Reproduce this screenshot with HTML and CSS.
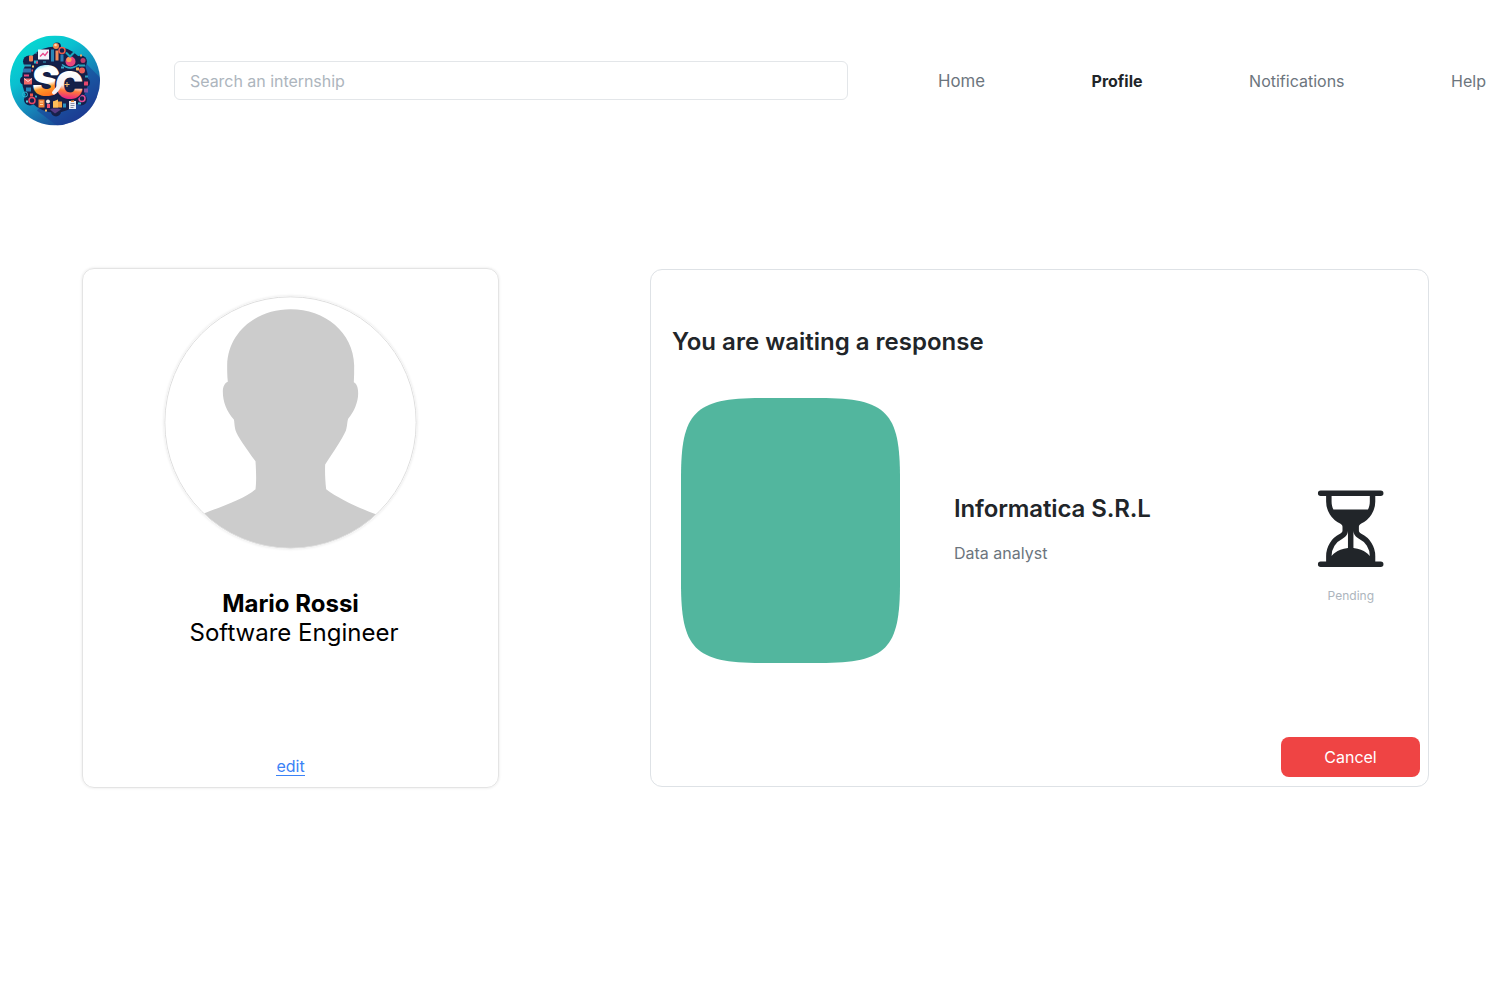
FILE: index.html
```html
<!DOCTYPE html>
<html lang="en">
<head>
<meta charset="utf-8">
<title>Profile</title>
<link rel="stylesheet" href="styles.css">
</head>
<body>
<header class="topbar">
  <svg class="logo" viewBox="0 0 90 91" role="img" aria-label="SC">
    <defs>
      <linearGradient id="sky" x1="0.1" y1="0" x2="0.8" y2="1">
        <stop offset="0" stop-color="#06e0d2"/><stop offset="0.35" stop-color="#0abfd0"/>
        <stop offset="0.62" stop-color="#1684b8"/><stop offset="1" stop-color="#1f2c86"/>
      </linearGradient>
      <linearGradient id="sFill" gradientUnits="userSpaceOnUse" x1="26" y1="27" x2="36" y2="62">
        <stop offset="0" stop-color="#35cfe6"/><stop offset="0.22" stop-color="#ffffff"/>
        <stop offset="0.62" stop-color="#ffffff"/><stop offset="0.74" stop-color="#ff9a2b"/><stop offset="1" stop-color="#ff6a1c"/>
      </linearGradient>
      <linearGradient id="cFill" gradientUnits="userSpaceOnUse" x1="62" y1="35" x2="58" y2="66">
        <stop offset="0" stop-color="#ffffff"/><stop offset="0.5" stop-color="#f4eef6"/>
        <stop offset="0.66" stop-color="#ff7a3a"/><stop offset="0.95" stop-color="#e5188f"/>
      </linearGradient>
      <clipPath id="disc"><circle cx="45" cy="45" r="45"/></clipPath>
    </defs>
    <g transform="translate(0 .5)"><g clip-path="url(#disc)">
      <rect width="90" height="90" fill="url(#sky)"/>
      <path d="M73 25L100 52V100H60L27 75z" fill="#1b3d96" opacity=".55"/>
      <circle cx="45" cy="44" r="33" fill="#16204a"/>
      <g fill="#16204a">
        <circle cx="47" cy="11" r="4"/><circle cx="19" cy="26" r="6"/><circle cx="71" cy="26" r="6"/>
        <circle cx="14" cy="45" r="4"/><circle cx="76" cy="47" r="4"/><circle cx="20" cy="64" r="6"/>
        <circle cx="71" cy="64" r="6"/><circle cx="46" cy="76" r="5"/>
      </g>
      <rect x="28" y="14" width="11" height="10" fill="#f2f4fa"/><path d="M30 21l3-3 2 2 3-4" stroke="#e8478b" stroke-width="1.3" fill="none"/>
      <circle cx="46" cy="10.500" r="3" fill="#f08a4c"/><circle cx="45.500" cy="9.500" r="1.300" fill="#ffd9b8"/>
      <rect x="41" y="14" width="3" height="12" fill="#2a86b8"/><rect x="45.500" y="15" width="3" height="10" fill="#f28b5c"/>
      <circle cx="52" cy="15" r="3" fill="none" stroke="#e95b4a" stroke-width="1.500"/><rect x="50.500" y="19" width="3" height="7" fill="#2c7cb5"/>
      <circle cx="60.500" cy="26" r="5" fill="#e8467f"/><circle cx="59" cy="24" r="2.600" fill="#ff9a5a"/>
      <path d="M52 29q8 7 17 0" stroke="#2aa7c7" stroke-width="1.500" fill="none"/><path d="M56 17l4 4 5-5" stroke="#18a7bd" stroke-width="2" fill="none"/>
      <rect x="19" y="20" width="4" height="6" rx="1" fill="#f27d55"/><rect x="24" y="25" width="4" height="3" fill="#2ab2c8"/>
      <rect x="14" y="29" width="7" height="2" fill="#28a0bb"/><rect x="13" y="33" width="8" height="4" fill="#3173ab"/>
      <rect x="22" y="30" width="2" height="2" fill="#f9c765"/><rect x="21.500" y="34" width="1.500" height="2" fill="#e94b6b"/>
      <rect x="14" y="43" width="8" height="6" fill="#f06a68"/><path d="M14 43l4 3 4-3" stroke="#ffe0df" fill="none"/>
      <rect x="14" y="39" width="5" height="2" fill="#e7487d"/><rect x="16" y="52" width="5" height="4" fill="#2683b8"/>
      <circle cx="15" cy="59" r="2.500" fill="none" stroke="#2fb4d0"/><rect x="20" y="58" width="3" height="3" fill="#ef5a4e"/>
      <circle cx="22" cy="65" r="3" fill="none" stroke="#e94764" stroke-width="1.500"/><rect x="16" y="65" width="2" height="2" fill="#57d2df"/>
      <rect x="28.500" y="64" width="6" height="8" fill="#f18439"/><path d="M30 66.500h3M30 69h3" stroke="#ffdca8"/>
      <circle cx="38" cy="66" r="2" fill="#f3e9df"/><rect x="37" y="68.500" width="3" height="4" fill="#ee5378"/>
      <rect x="43" y="66" width="9" height="6" fill="#f3a043"/><path d="M43 66l5-2v8h-5z" fill="#ffbf59"/>
      <rect x="53" y="68" width="3" height="4" fill="#2b90bf"/>
      <path d="M40 74l5 4 6-4-3-1h-6z" fill="#563a83"/><rect x="35" y="74" width="2" height="2" fill="#f7bb5f"/>
      <rect x="59" y="65.500" width="7" height="8" fill="#eef1f6"/><path d="M60.500 68h4M60.500 70h4M60.500 72h3" stroke="#6c7392" stroke-width=".8"/><rect x="61" y="64.500" width="3" height="2" fill="#f4903e"/>
      <circle cx="72" cy="63" r="3" fill="none" stroke="#e14c9a" stroke-width="1.500"/><rect x="68" y="67" width="3" height="2" fill="#37bcd0"/>
      <rect x="74" y="53" width="4" height="4" fill="#8650a2"/><rect x="74" y="46" width="4" height="4" fill="#e9476d"/>
      <circle cx="72" cy="35" r="3" fill="#e95d57"/><rect x="66" y="32" width="3" height="3" fill="#f6ae5b"/><rect x="75" y="40" width="3" height="2" fill="#2c9fbe"/>
      <rect x="69" y="29" width="6" height="2" fill="#25a6b8"/><circle cx="73" cy="25" r="2.500" fill="#bf3b69"/>
      <rect x="70" y="19" width="2" height="2" fill="#f9a65c"/><rect x="26" y="26" width="2" height="2" fill="#e94b6b"/>
      <g fill="#35a9c8"><rect x="33" y="26" width="3" height="1"/><rect x="51" y="31" width="3" height="2"/><rect x="25" y="60" width="2" height="2"/><rect x="25" y="17" width="2" height="1"/></g>
      <text class="logo-text"><tspan class="logo-s" x="22" y="60.500" fill="url(#sFill)">S</tspan><tspan class="logo-c" x="45" y="63.500" fill="url(#cFill)">C</tspan></text>
      <path d="M44 57Q48 54 50 48" stroke="#f4f2f7" stroke-width="4" stroke-linecap="round" fill="none"/>
      <path d="M57 46.500v5M54.500 49h5" stroke="#ffbc68"/>
    </g></g>
  </svg>
  <input class="search" type="text" placeholder="Search an internship">
  <nav class="nav">
    <a class="nav-home">Home</a>
    <a class="nav-active">Profile</a>
    <a>Notifications</a>
    <a>Help</a>
  </nav>
</header>
<main class="content">
  <section class="profile">
    <svg class="avatar" viewBox="41.500 32.500 759 759" aria-hidden="true">
      <defs><clipPath id="portrait"><circle cx="421" cy="412" r="377"/></clipPath></defs>
      <path clip-path="url(#portrait)" fill="#ccc" d="M163 684C220 662 284 640 316 612C319 590 318 560 316 528C285 486 262 453 256 435C252 418 253 410 251 403C230 380 218 350 218 320C218 304 224 293 233 290C231 270 231 255 231 240C234 140 320 72 421 72C524 72 609 140 612 240C612 258 612 275 611 291C620 296 624 306 624 325C624 350 612 380 594 401C590 414 592 422 587 437C576 462 550 500 525 538C524 560 525 586 528 612C563 639 625 668 679 688V800H163Z"/>
      <circle cx="421" cy="412" r="377" fill="none" stroke="#dedede" stroke-width="3"/>
    </svg>
    <h2 class="name">Mario Rossi</h2>
    <p class="role">Software Engineer</p>
    <a class="edit">edit</a>
  </section>
  <section class="request">
    <h2 class="title">You are waiting a response</h2>
    <div class="application">
      <svg class="company-image" viewBox="0 0 219 265" aria-hidden="true">
        <path fill="#52b69e" d="M0 80C0 15 13 0 80 0H139C206 0 219 15 219 80V185C219 250 206 265 139 265H80C13 265 0 250 0 185Z"/>
      </svg>
      <div class="company">
        <h3 class="company-name">Informatica S.R.L</h3>
        <p class="position">Data analyst</p>
      </div>
      <div class="status">
        <svg class="hourglass" viewBox="0 0 16 16" fill="#212529" aria-hidden="true"><path d="M2.500 15a.5.5 0 1 1 0-1h1v-1a4.500 4.500 0 0 1 2.557-4.060c.29-.139.443-.377.443-.59v-.7c0-.213-.154-.451-.443-.59A4.500 4.500 0 0 1 3.500 3V2h-1a.5.5 0 0 1 0-1h11a.5.5 0 0 1 0 1h-1v1a4.500 4.500 0 0 1-2.557 4.060c-.29.139-.443.377-.443.59v.7c0 .213.154.451.443.59A4.500 4.500 0 0 1 12.500 13v1h1a.5.5 0 0 1 0 1zm2-13v1c0 .537.12 1.045.337 1.500h6.326c.216-.455.337-.963.337-1.500V2zm3 6.350c0 .701-.478 1.236-1.011 1.492A3.500 3.500 0 0 0 4.500 13s.866-1.299 3-1.480zm1 0v3.170c2.134.181 3 1.480 3 1.480a3.500 3.500 0 0 0-1.989-3.158C8.978 9.586 8.500 9.052 8.500 8.351z"/></svg>
        <span class="status-label">Pending</span>
      </div>
    </div>
    <button class="cancel">Cancel</button>
  </section>
</main>
</body>
</html>
```
FILE: styles.css
```css
* { box-sizing: border-box; }
body {
  margin: 0;
  min-height: 982px;
  background: #fff;
  font-family: Inter, "Liberation Sans", sans-serif;
  font-size: 16px;
  color: #212529;
}
h2, h3, p { margin: 0; }

.topbar {
  display: flex;
  align-items: center;
  height: 161px;
  padding: 0 26px 1px 10px;
}
.logo { flex: none; width: 90px; height: 91px; margin-top: 1px; }
.logo-text { font-family: Inter, sans-serif; font-weight: 900; stroke: #131d44; stroke-width: 3px; paint-order: stroke; }
.logo-s { font-size: 43px; letter-spacing: -6px; }
.logo-c { font-size: 38px; }
.search {
  flex: none;
  width: 674px;
  height: 39px;
  margin: 1px 0 0 74px;
  padding: 1px 15px 0;
  border: 1px solid #e3e6e9;
  border-radius: 6px;
  background: #fff;
  font: 400 16px Inter, sans-serif;
  letter-spacing: -.04px;
  outline: none;
}
.search::placeholder { color: #adb5bd; opacity: 1; }
.nav {
  flex: 1;
  display: flex;
  justify-content: space-between;
  margin-left: 90px;
  padding-top: 2px;
  line-height: 24px;
  color: #6c757d;
}
.nav-home { font-size: 16.800px; }
.nav-active { font-weight: 700; color: #212529; }

.content {
  display: flex;
  align-items: flex-start;
  padding: 107px 83px 0 82px;
}
.profile {
  display: flex;
  flex-direction: column;
  align-items: center;
  width: 417px;
  height: 520px;
  padding: 27px 0 11px;
  border: 1px solid #e4e4e4;
  border-radius: 12px;
  box-shadow: 0 0 3px rgba(0, 0, 0, .1);
  color: #000;
}
.avatar {
  flex: none;
  width: 253px;
  height: 253px;
  border-radius: 50%;
  box-shadow: 0 0 3px rgba(0, 0, 0, .12);
}
.name { margin-top: 40px; font-size: 24px; line-height: 29px; font-weight: 700; }
.role { margin-left: 7px; font-size: 24px; line-height: 29px; }
.edit {
  margin-top: auto;
  border-bottom: 1px solid #3b82f6;
  line-height: 18px;
  color: #3b82f6;
}

.request {
  display: flex;
  flex-direction: column;
  width: 779px;
  height: 518px;
  margin: 1px 0 0 151px;
  padding: 57px 8px 9px 21px;
  border: 1px solid #dee2e6;
  border-radius: 12px;
}
.title { font-size: 24px; line-height: 30px; font-weight: 600; }
.application {
  display: flex;
  align-items: center;
  margin: 41px 25.500px 0 9px;
}
.company-image { flex: none; width: 219px; height: 265px; }
.company { margin: 0 0 3px 54px; }
.company-name { font-size: 24px; line-height: 29px; font-weight: 600; letter-spacing: -.12px; }
.position { margin-top: 18px; line-height: 24px; color: #6c757d; }
.status {
  display: flex;
  flex-direction: column;
  align-items: center;
  margin-left: auto;
  margin-top: 29px;
}
.hourglass { width: 87.400px; height: 87.400px; }
.status-label { margin-top: 14px; font-size: 12px; line-height: 18px; color: #adb5bd; }
.cancel {
  width: 139px;
  height: 40px;
  margin: auto 0 0 auto;
  border: 0;
  border-radius: 8px;
  background: #ef4444;
  color: #fff;
  font: 400 16px Inter, sans-serif;
}
```
